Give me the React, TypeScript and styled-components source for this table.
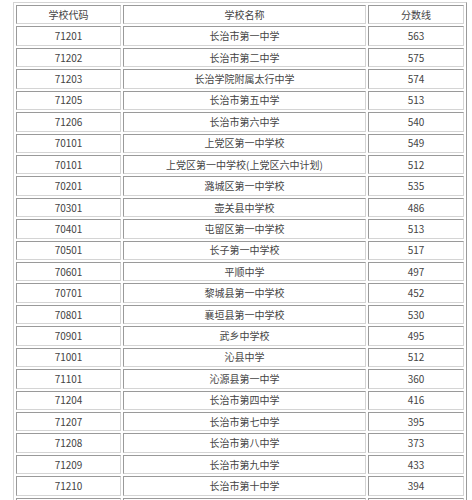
import styled, { createGlobalStyle } from 'styled-components'

const GlobalStyle = createGlobalStyle`
  html, body {
    margin: 0;
    padding: 0;
    background: #fff;
  }
`

const Page = styled.div`
  padding: 2px 0 0 13px;
  width: 472px;
  height: 500px;
  overflow: hidden;
  box-sizing: border-box;
`

const Table = styled.table`
  width: 454px;
  border-collapse: separate;
  border-spacing: 2px;
  border: 1px solid;
  border-color: #d4d4d4 #9a9a9a #9a9a9a #d4d4d4;
  table-layout: fixed;
  font-family: "Noto Sans CJK SC", "Noto Sans", sans-serif;
  font-size: 10px;
  color: #444;
`

const Cell = styled.td<{ $w?: number }>`
  ${(p) => (p.$w ? `width: ${p.$w}px;` : '')}
  height: 19.43px;
  padding: 0;
  box-sizing: border-box;
  border: 1px solid;
  border-color: #9a9a9a #d4d4d4 #d4d4d4 #9a9a9a;
  text-align: center;
  vertical-align: middle;
  line-height: 1;
  white-space: nowrap;
`

const rows: [string, string, string][] = [
  ['71201', '长治市第一中学', '563'],
  ['71202', '长治市第二中学', '575'],
  ['71203', '长治学院附属太行中学', '574'],
  ['71205', '长治市第五中学', '513'],
  ['71206', '长治市第六中学', '540'],
  ['70101', '上党区第一中学校', '549'],
  ['70101', '上党区第一中学校(上党区六中计划)', '512'],
  ['70201', '潞城区第一中学校', '535'],
  ['70301', '壶关县中学校', '486'],
  ['70401', '屯留区第一中学校', '513'],
  ['70501', '长子第一中学校', '517'],
  ['70601', '平顺中学', '497'],
  ['70701', '黎城县第一中学校', '452'],
  ['70801', '襄垣县第一中学校', '530'],
  ['70901', '武乡中学校', '495'],
  ['71001', '沁县中学', '512'],
  ['71101', '沁源县第一中学', '360'],
  ['71204', '长治市第四中学', '416'],
  ['71207', '长治市第七中学', '395'],
  ['71208', '长治市第八中学', '373'],
  ['71209', '长治市第九中学', '433'],
  ['71210', '长治市第十中学', '394'],
  ['', '', ''],
]

export default function App() {
  return (
    <>
      <GlobalStyle />
      <Page>
        <Table>
          <tbody>
            <tr>
              <Cell $w={105}>学校代码</Cell>
              <Cell $w={243}>学校名称</Cell>
              <Cell $w={96}>分数线</Cell>
            </tr>
            {rows.map(([code, name, score], i) => (
              <tr key={i}>
                <Cell>{code}</Cell>
                <Cell>{name}</Cell>
                <Cell>{score}</Cell>
              </tr>
            ))}
          </tbody>
        </Table>
      </Page>
    </>
  )
}
